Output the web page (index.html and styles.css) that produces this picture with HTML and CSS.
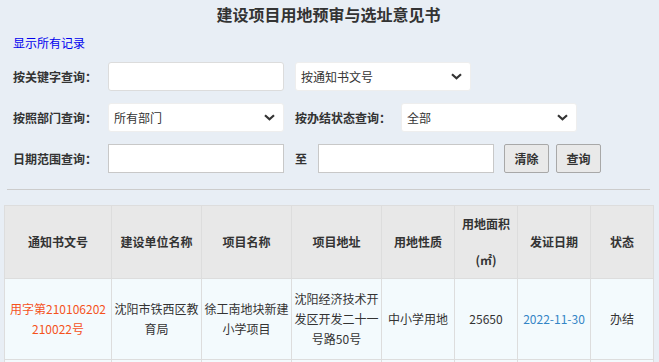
FILE: index.html
```html
<!DOCTYPE html>
<html lang="zh-CN">
<head>
    <meta charset="UTF-8">
    <title>建设项目用地预审与选址意见书</title>
    <link rel="stylesheet" href="styles.css">
</head>
<body>

<div class="page">
    <h1 class="title">建设项目用地预审与选址意见书</h1>
    <a class="show-all" href="#">显示所有记录</a>

    <div class="search">
        <div class="row">
            <label class="lbl" for="kw">按关键字查询：</label>
            <input class="txt" type="text" id="kw">
            <span class="sel-wrap">
                <select class="sel">
                    <option>按通知书文号</option>
                    <option>按建设单位名称</option>
                    <option>按项目名称</option>
                </select>
                <svg class="chev" width="11" height="7" viewBox="0 0 11 7"><path d="M1 1.2 L5.5 5.3 L10 1.2" fill="none" stroke="#333" stroke-width="2.2"/></svg>
            </span>
        </div>
        <div class="row">
            <label class="lbl">按照部门查询：</label>
            <span class="sel-wrap">
                <select class="sel">
                    <option>所有部门</option>
                </select>
                <svg class="chev" width="11" height="7" viewBox="0 0 11 7"><path d="M1 1.2 L5.5 5.3 L10 1.2" fill="none" stroke="#333" stroke-width="2.2"/></svg>
            </span>
            <label class="lbl lbl-auto">按办结状态查询：</label>
            <span class="sel-wrap">
                <select class="sel">
                    <option>全部</option>
                    <option>办结</option>
                    <option>在办</option>
                </select>
                <svg class="chev" width="11" height="7" viewBox="0 0 11 7"><path d="M1 1.2 L5.5 5.3 L10 1.2" fill="none" stroke="#333" stroke-width="2.2"/></svg>
            </span>
        </div>
        <div class="row">
            <label class="lbl">日期范围查询：</label>
            <input class="txt txt-date" type="text">
            <span class="to">至</span>
            <input class="txt txt-date" type="text">
            <button class="btn btn-clear">清除</button>
            <button class="btn">查询</button>
        </div>
    </div>

    <hr class="line">

    <table class="list">
        <colgroup>
            <col style="width:107px">
            <col style="width:90px">
            <col style="width:90px">
            <col style="width:90px">
            <col style="width:73px">
            <col style="width:63px">
            <col style="width:73px">
            <col style="width:63px">
        </colgroup>
        <thead>
            <tr>
                <th>通知书文号</th>
                <th>建设单位名称</th>
                <th>项目名称</th>
                <th>项目地址</th>
                <th>用地性质</th>
                <th>用地面积<br>(㎡)</th>
                <th>发证日期</th>
                <th>状态</th>
            </tr>
        </thead>
        <tbody>
            <tr>
                <td><a class="doc-no" href="#">用字第210106202210022号</a></td>
                <td>沈阳市铁西区教育局</td>
                <td>徐工南地块新建小学项目</td>
                <td>沈阳经济技术开发区开发二十一号路50号</td>
                <td>中小学用地</td>
                <td>25650</td>
                <td class="date">2022-11-30</td>
                <td>办结</td>
            </tr>
            <tr>
                <td><a class="doc-no" href="#">用字第210106202210021号</a></td>
                <td>沈阳市铁西区教育局</td>
                <td>新建中学项目</td>
                <td>沈阳经济技术开发区</td>
                <td>中小学用地</td>
                <td>31200</td>
                <td class="date">2022-11-28</td>
                <td>办结</td>
            </tr>
        </tbody>
    </table>
</div>

</body>
</html>
```

FILE: styles.css
```css
body {
    margin: 0;
    padding: 0;
    background: #e8eef5;
    font-family: "Noto Sans CJK SC", "Noto Sans", sans-serif;
    font-size: 12px;
    color: #333;
}
.page {
    padding: 0 6px 0 4px;
}
.title {
    margin: 0;
    padding-top: 4px;
    font-size: 16px;
    line-height: 20px;
    text-align: center;
    color: #333;
}
.show-all {
    display: inline-block;
    margin: 11px 0 0 9px;
    font-size: 12px;
    line-height: 16px;
    color: #0000ee;
    text-decoration: none;
}
.search {
    padding: 11px 0 0 9px;
}
.row {
    display: flex;
    align-items: center;
    gap: 11px;
    margin-bottom: 12px;
}
.lbl {
    width: 84px;
    font-weight: bold;
    color: #333;
    white-space: nowrap;
}
.lbl-auto {
    width: auto;
    margin-right: -1px;
}
.txt {
    box-sizing: border-box;
    width: 176px;
    height: 29px;
    margin: 0;
    border: 1px solid #dcdcdc;
    border-radius: 3px;
    background: #fff;
}
.txt-date {
    border: 1px solid #c8c8c8;
    border-radius: 0;
}
.sel-wrap {
    position: relative;
    display: block;
}
.sel {
    box-sizing: border-box;
    width: 176px;
    height: 29px;
    margin: 0;
    padding: 0 5px;
    border: 1px solid #eee;
    border-radius: 3px;
    background: #fff;
    font-family: inherit;
    font-size: 12px;
    color: #333;
    appearance: none;
    -webkit-appearance: none;
}
.chev {
    position: absolute;
    right: 9px;
    top: 11px;
    pointer-events: none;
}
.to {
    width: 12px;
    font-weight: bold;
}
.btn {
    box-sizing: border-box;
    width: 45px;
    height: 29px;
    margin: 0 0 0 -1px;
    padding: 0;
    border: 1px solid #a8a8a8;
    border-radius: 2px;
    background: #e9e9e9;
    font-family: inherit;
    font-size: 12px;
    font-weight: bold;
    color: #333;
}
.btn-clear + .btn {
    margin-left: -4px;
}
.line {
    margin: 16px 3px 15px 3px;
    border: 0;
    border-top: 1px solid #ccc;
}
.list {
    border-collapse: collapse;
    table-layout: fixed;
    width: 650px;
    background: #f3fafd;
}
.list th,
.list td {
    border: 1px solid #ddd;
    text-align: center;
    word-break: break-all;
}
.list th {
    background: #e8e8e8;
    padding: 0 2px;
    line-height: 36px;
    font-weight: bold;
    color: #333;
}
.list td {
    padding: 10px 2px;
    line-height: 20px;
    color: #333;
}
.doc-no {
    color: #f5521c;
    text-decoration: none;
}
.date {
    color: #3385c6 !important;
}
```
